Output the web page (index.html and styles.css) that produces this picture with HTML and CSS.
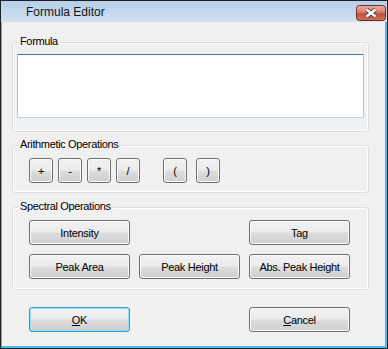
FILE: index.html
```html
<!DOCTYPE html>
<html>
<head>
<meta charset="utf-8">
<link rel="stylesheet" href="styles.css">
</head>
<body>
<div class="window">
  <div class="titlebar">
    <span class="title">Formula Editor</span>
    <span class="close">
      <svg width="30" height="16" viewBox="0 0 30 16">
        <defs>
          <linearGradient id="cg" x1="0" y1="0" x2="0" y2="1">
            <stop offset="0" stop-color="#eab0a2"/>
            <stop offset="0.45" stop-color="#d8806c"/>
            <stop offset="0.55" stop-color="#c4503a"/>
            <stop offset="1" stop-color="#d27058"/>
          </linearGradient>
        </defs>
        <rect x="0.5" y="0.5" width="29" height="15" rx="3" fill="url(#cg)" stroke="#6f2c24"/>
        <path d="M10.5 4.5 L19.5 11.5 M19.5 4.5 L10.5 11.5" stroke="#4e3a38" stroke-width="4.4"/>
        <path d="M10.5 4.5 L19.5 11.5 M19.5 4.5 L10.5 11.5" stroke="#ffffff" stroke-width="2.6"/>
      </svg>
    </span>
  </div>
  <div class="client">
    <div class="group g-formula">
      <div class="legend">Formula</div>
      <div class="textarea"></div>
    </div>
    <div class="group g-arith">
      <div class="legend">Arithmetic Operations</div>
      <div class="ops">
        <button class="btn op">+</button>
        <button class="btn op">-</button>
        <button class="btn op">*</button>
        <button class="btn op">/</button>
        <button class="btn op paren-open">(</button>
        <button class="btn op paren-close">)</button>
      </div>
    </div>
    <div class="group g-spec">
      <div class="legend">Spectral Operations</div>
      <div class="spec-grid">
        <button class="btn wide">Intensity</button>
        <span class="spacer"></span>
        <button class="btn wide">Tag</button>
        <button class="btn wide">Peak Area</button>
        <button class="btn wide">Peak Height</button>
        <button class="btn wide">Abs. Peak Height</button>
      </div>
    </div>
    <div class="actions">
      <button class="btn wide default"><u>O</u>K</button>
      <button class="btn wide"><u>C</u>ancel</button>
    </div>
  </div>
</div>
</body>
</html>
```
FILE: styles.css
```css
* { box-sizing: border-box; }
html, body { margin: 0; padding: 0; background: #f0f0f0; }
body { font-family: "Liberation Sans", Arial, sans-serif; font-size: 11px; color: #000; }

.window {
  width: 388px;
  height: 349px;
  border: 1px solid #1e2126;
  display: flex;
  flex-direction: column;
  background: #f0f0f0;
}

.titlebar {
  height: 21px;
  flex: none;
  display: flex;
  align-items: center;
  justify-content: space-between;
  padding-left: 25px;
  padding-right: 1px;
  background: linear-gradient(#b7cfe9, #c4d8ee 55%, #d3e2f2);
}
.title {
  font-size: 12px;
  color: #141414;
  line-height: 14px;
  padding-top: 1px;
}
.close { display: flex; height: 16px; margin-top: 2px; }

.client {
  flex: 1;
  border-left: 1px solid #4bbbe9;
  border-right: 2px solid #4bbbe9;
  border-bottom: 2px solid #4bbbe9;
  padding: 20px 0 0 10px;
}

.group {
  width: 357px;
  border: 1px solid #d5dfe5;
  border-radius: 3px;
  box-shadow: inset 0 0 0 1px #ffffff;
}
.legend {
  width: fit-content;
  margin: -8px 0 0 5px;
  padding: 0 2px;
  line-height: 13px;
  height: 13px;
  background: #f0f0f0;
  letter-spacing: -0.35px;
}

.g-formula { padding-bottom: 13px; }
.textarea {
  margin: 6px 4px 0 4px;
  height: 64px;
  background: #fff;
  border: 1px solid;
  border-color: #3d7bad #a9cbe4 #b7d7ee #a9cbe4;
  border-radius: 1px;
}

.g-arith { margin-top: 13px; padding-bottom: 9px; }
.ops {
  display: flex;
  gap: 5px;
  margin: 7px 0 0 16px;
}
.paren-open { margin-left: 18px; }
.paren-close { margin-left: 4px; }

.btn {
  font-family: "Liberation Sans", Arial, sans-serif;
  font-size: 11px;
  color: #000;
  height: 25px;
  padding: 0;
  border: 1px solid #707070;
  border-radius: 3px;
  background: linear-gradient(#f2f2f2 0%, #ebebeb 48%, #dddddd 52%, #cfcfcf 100%);
  box-shadow: inset 0 0 0 1px #fbfbfb;
  display: flex;
  align-items: center;
  justify-content: center;
  letter-spacing: -0.3px;
}
.op { width: 24px; }
.wide { width: 101px; }
.default {
  border-color: #3c96d2;
  box-shadow: inset 0 0 0 1px #92def9;
}
.btn u { text-decoration-thickness: 1px; text-underline-offset: 1px; }

.g-spec { margin-top: 14px; padding-bottom: 10px; }
.spec-grid {
  display: grid;
  grid-template-columns: 101px 101px 101px;
  gap: 9px;
  margin: 7px 0 0 16px;
}

.actions {
  display: flex;
  gap: 119px;
  margin: 17px 0 0 17px;
}
```
